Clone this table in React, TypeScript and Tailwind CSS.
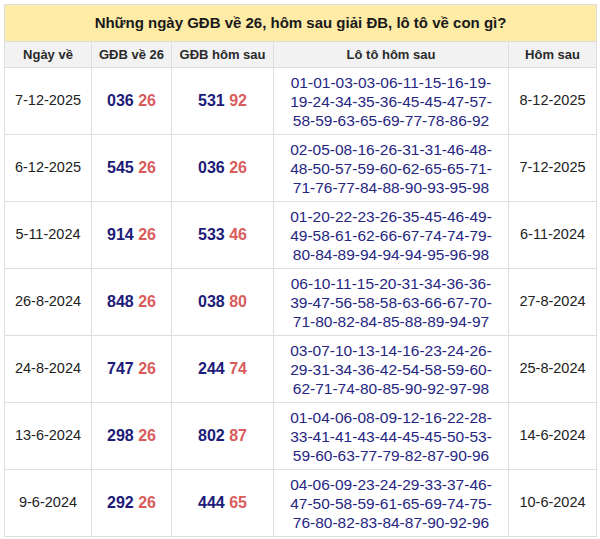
const rows = [
  {
    day: "7-12-2025",
    gdb: ["036", "26"],
    next: ["531", "92"],
    loto: ["01-01-03-03-06-11-15-16-19-", "19-24-34-35-36-45-45-47-57-", "58-59-63-65-69-77-78-86-92"],
    after: "8-12-2025",
  },
  {
    day: "6-12-2025",
    gdb: ["545", "26"],
    next: ["036", "26"],
    loto: ["02-05-08-16-26-31-31-46-48-", "48-50-57-59-60-62-65-65-71-", "71-76-77-84-88-90-93-95-98"],
    after: "7-12-2025",
  },
  {
    day: "5-11-2024",
    gdb: ["914", "26"],
    next: ["533", "46"],
    loto: ["01-20-22-23-26-35-45-46-49-", "49-58-61-62-66-67-74-74-79-", "80-84-89-94-94-94-95-96-98"],
    after: "6-11-2024",
  },
  {
    day: "26-8-2024",
    gdb: ["848", "26"],
    next: ["038", "80"],
    loto: ["06-10-11-15-20-31-34-36-36-", "39-47-56-58-58-63-66-67-70-", "71-80-82-84-85-88-89-94-97"],
    after: "27-8-2024",
  },
  {
    day: "24-8-2024",
    gdb: ["747", "26"],
    next: ["244", "74"],
    loto: ["03-07-10-13-14-16-23-24-26-", "29-31-34-36-42-54-58-59-60-", "62-71-74-80-85-90-92-97-98"],
    after: "25-8-2024",
  },
  {
    day: "13-6-2024",
    gdb: ["298", "26"],
    next: ["802", "87"],
    loto: ["01-04-06-08-09-12-16-22-28-", "33-41-41-43-44-45-45-50-53-", "59-60-63-77-79-82-87-90-96"],
    after: "14-6-2024",
  },
  {
    day: "9-6-2024",
    gdb: ["292", "26"],
    next: ["444", "65"],
    loto: ["04-06-09-23-24-29-33-37-46-", "47-50-58-59-61-65-69-74-75-", "76-80-82-83-84-87-90-92-96"],
    after: "10-6-2024",
  },
];

function Pair({ v }: { v: string[] }) {
  return (
    <span className="text-[16px] font-bold">
      <span className="text-[#1c1c78]">{v[0]}</span>{" "}
      <span className="text-[#d95c5c]">{v[1]}</span>
    </span>
  );
}

export default function App() {
  return (
    <div className="min-h-[539px] bg-white pl-[4px] pt-[4px] font-['Liberation_Sans',Arial,sans-serif]">
      <table className="w-[592px] table-fixed border-collapse text-center text-[#222]">
        <colgroup>
          <col className="w-[87px]" />
          <col className="w-[80px]" />
          <col className="w-[102px]" />
          <col className="w-[235px]" />
          <col className="w-[88px]" />
        </colgroup>
        <thead>
          <tr className="h-[37px] bg-[#fdeba6]">
            <th colSpan={5} className="border border-[#dedede] text-[15px] font-bold text-[#1a1a1a]">
              Những ngày GĐB về 26, hôm sau giải ĐB, lô tô về con gì?
            </th>
          </tr>
          <tr className="h-[26px] bg-[#f2f2f2] text-[13px] font-bold text-[#2a2a2a]">
            <th className="border border-[#dedede]">Ngày về</th>
            <th className="border border-[#dedede]">GĐB về 26</th>
            <th className="border border-[#dedede]">GĐB hôm sau</th>
            <th className="border border-[#dedede]">Lô tô hôm sau</th>
            <th className="border border-[#dedede]">Hôm sau</th>
          </tr>
        </thead>
        <tbody>
          {rows.map((r) => (
            <tr key={r.day} className="h-[67px]">
              <td className="border border-[#dedede] text-[14.5px]">{r.day}</td>
              <td className="border border-[#dedede]">
                <Pair v={r.gdb} />
              </td>
              <td className="border border-[#dedede]">
                <Pair v={r.next} />
              </td>
              <td className="border border-[#dedede] text-[15.5px] leading-[19px] text-[#262682]">
                {r.loto.map((l) => (
                  <div key={l}>{l}</div>
                ))}
              </td>
              <td className="border border-[#dedede] text-[14.5px]">{r.after}</td>
            </tr>
          ))}
        </tbody>
      </table>
    </div>
  );
}
